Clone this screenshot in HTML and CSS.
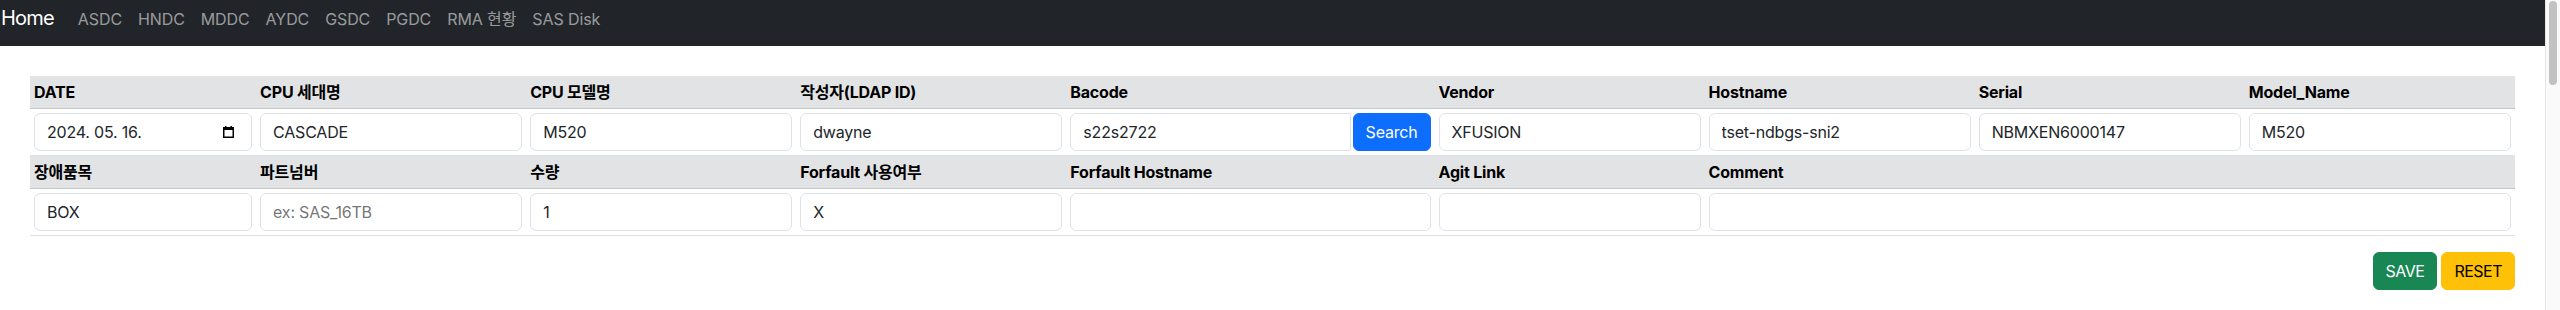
FILE: index.html
```html
<!DOCTYPE html>
<html lang="ko">
<head>
<meta charset="utf-8">
<title>Home</title>
<link rel="stylesheet" href="styles.css">
</head>
<body>
<nav class="navbar">
  <a class="brand" href="#">Home</a>
  <ul class="nav">
    <li><a class="nav-link" href="#">ASDC</a></li>
    <li><a class="nav-link" href="#">HNDC</a></li>
    <li><a class="nav-link" href="#">MDDC</a></li>
    <li><a class="nav-link" href="#">AYDC</a></li>
    <li><a class="nav-link" href="#">GSDC</a></li>
    <li><a class="nav-link" href="#">PGDC</a></li>
    <li><a class="nav-link" href="#">RMA 현황</a></li>
    <li><a class="nav-link" href="#">SAS Disk</a></li>
  </ul>
</nav>
<main class="page">
  <form class="entry-form">
    <table class="entry-table">
      <colgroup>
        <col class="c-date">
        <col class="c-std">
        <col class="c-std">
        <col class="c-std">
        <col class="c-wide">
        <col class="c-std">
        <col class="c-std">
        <col class="c-std">
        <col class="c-std">
      </colgroup>
      <tbody>
        <tr>
          <th>DATE</th>
          <th>CPU 세대명</th>
          <th>CPU 모델명</th>
          <th>작성자(LDAP ID)</th>
          <th>Bacode</th>
          <th>Vendor</th>
          <th>Hostname</th>
          <th>Serial</th>
          <th>Model_Name</th>
        </tr>
        <tr>
          <td>
            <div class="form-control date-control">
              <span>2024. 05. 16.</span>
              <svg class="cal-icon" width="11" height="12" viewBox="0 0 11 12" aria-hidden="true">
                <rect x="0.75" y="1.75" width="9.5" height="9.5" fill="none" stroke="#000" stroke-width="1.5"/>
                <rect x="0" y="1" width="11" height="3" fill="#000"/>
                <rect x="2" y="0" width="1.5" height="2" fill="#000"/>
                <rect x="7.5" y="0" width="1.5" height="2" fill="#000"/>
              </svg>
            </div>
          </td>
          <td><input class="form-control" type="text" value="CASCADE"></td>
          <td><input class="form-control" type="text" value="M520"></td>
          <td><input class="form-control" type="text" value="dwayne"></td>
          <td>
            <div class="search-group">
              <input class="form-control flat-right" type="text" value="s22s2722">
              <button class="btn btn-primary" type="button">Search</button>
            </div>
          </td>
          <td><input class="form-control" type="text" value="XFUSION"></td>
          <td><input class="form-control" type="text" value="tset-ndbgs-sni2"></td>
          <td><input class="form-control" type="text" value="NBMXEN6000147"></td>
          <td><input class="form-control" type="text" value="M520"></td>
        </tr>
        <tr>
          <th>장애품목</th>
          <th>파트넘버</th>
          <th>수량</th>
          <th>Forfault 사용여부</th>
          <th>Forfault Hostname</th>
          <th>Agit Link</th>
          <th colspan="3">Comment</th>
        </tr>
        <tr>
          <td><input class="form-control" type="text" value="BOX"></td>
          <td><input class="form-control" type="text" placeholder="ex: SAS_16TB"></td>
          <td><input class="form-control" type="text" value="1"></td>
          <td><input class="form-control" type="text" value="X"></td>
          <td><input class="form-control" type="text" value=""></td>
          <td><input class="form-control" type="text" value=""></td>
          <td colspan="3"><input class="form-control" type="text" value=""></td>
        </tr>
      </tbody>
    </table>
    <div class="actions">
      <button class="btn btn-success" type="button">SAVE</button>
      <button class="btn btn-warning" type="button">RESET</button>
    </div>
  </form>
</main>
<div class="scrollbar" aria-hidden="true"><div class="scrollbar-thumb"></div></div>
</body>
</html>
```

FILE: styles.css
```css
* {
  box-sizing: border-box;
}

body {
  margin: 0;
  padding-right: 15px;
  font-family: Inter, "Noto Sans CJK KR", sans-serif;
  font-size: 16px;
  line-height: 1.5;
  color: #212529;
  background: #fff;
}

/* fake macOS scrollbar at the window edge */
.scrollbar {
  position: fixed;
  top: 0;
  right: 0;
  width: 15px;
  height: 100vh;
  padding: 1px 3px 0 3px;
  background: #fafafa;
  border-left: 1px solid #e6e6e6;
}

.scrollbar-thumb {
  width: 8px;
  height: 84px;
  margin-left: auto;
  background: #c2c2c2;
  border-radius: 4px;
}

/* navbar */
.navbar {
  display: flex;
  align-items: baseline;
  height: 46px;
  padding: 3px 0 0 0;
  background: #212529;
}

.brand {
  margin-right: 16px;
  padding-left: 1px;
  font-size: 20px;
  line-height: 30px;
  letter-spacing: -0.8px;
  color: #fff;
  text-decoration: none;
}

.nav {
  display: flex;
  margin: 0;
  padding: 0;
  list-style: none;
}

.nav-link {
  display: block;
  padding: 0 8px;
  line-height: 24px;
  letter-spacing: -0.1px;
  color: rgba(255, 255, 255, 0.55);
  text-decoration: none;
}

/* page */
.page {
  padding: 30px 30px 0;
}

.entry-table {
  width: 100%;
  border-collapse: collapse;
  table-layout: fixed;
}

.c-date { width: 226px; }
.c-std { width: 270px; }
.c-wide { width: 368px; }

.entry-table th {
  padding: 4px;
  text-align: left;
  font-weight: 700;
  line-height: 24px;
  letter-spacing: -0.2px;
  color: #000;
  background: #e2e3e5;
  border-bottom: 1px solid #c6c7c8;
  white-space: nowrap;
}

.entry-table td {
  padding: 4px;
  background: #fff;
  border-bottom: 1px solid #dee2e6;
}

.form-control {
  display: block;
  width: 100%;
  height: 38px;
  margin: 0;
  padding: 6px 12px;
  font-family: Inter, "Noto Sans CJK KR", sans-serif;
  font-size: 16px;
  line-height: 24px;
  letter-spacing: -0.2px;
  color: #212529;
  background: #fff;
  border: 1px solid #dee2e6;
  border-radius: 6px;
  outline: none;
}

.form-control::placeholder {
  color: rgba(33, 37, 41, 0.65);
}

.date-control {
  display: flex;
  align-items: center;
  justify-content: space-between;
}

.cal-icon {
  margin-right: 5px;
}

.search-group {
  display: flex;
  gap: 2px;
}

.search-group .form-control {
  flex: 1 1 auto;
  min-width: 0;
}

.flat-right {
  border-top-right-radius: 0;
  border-bottom-right-radius: 0;
}

.btn {
  flex: none;
  height: 38px;
  margin: 0;
  padding: 6px 12px;
  font-family: Inter, "Noto Sans CJK KR", sans-serif;
  font-size: 16px;
  line-height: 24px;
  letter-spacing: -0.2px;
  border: 1px solid transparent;
  border-radius: 6px;
  cursor: pointer;
}

.btn-primary {
  color: #fff;
  background: #0d6efd;
  border-color: #0d6efd;
}

.btn-success {
  color: #fff;
  background: #198754;
  border-color: #198754;
}

.btn-warning {
  color: #000;
  background: #ffc107;
  border-color: #ffc107;
}

.actions {
  display: flex;
  justify-content: flex-end;
  gap: 4px;
  margin-top: 16px;
}

.actions .btn {
  letter-spacing: -0.5px;
}
```
